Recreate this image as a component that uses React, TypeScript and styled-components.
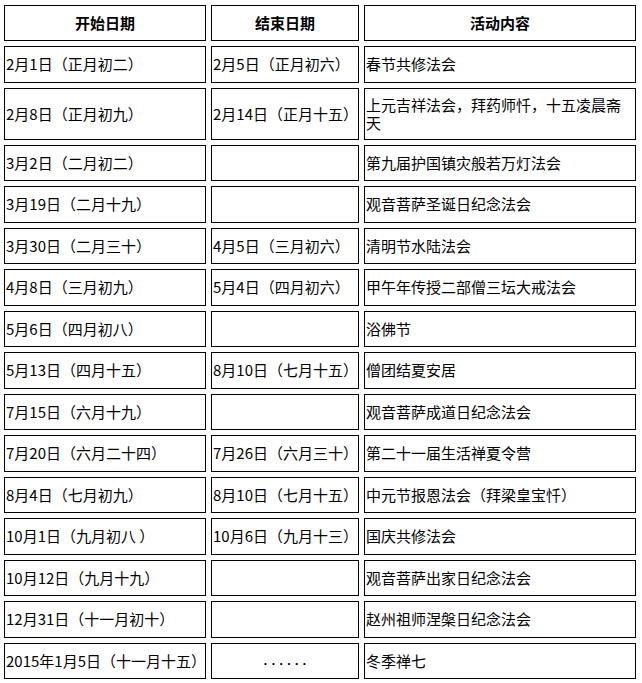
import React from 'react'
import styled, { createGlobalStyle } from 'styled-components'

interface EventRow {
  start: string
  end: string
  content: string
  tall?: boolean
}

const rows: EventRow[] = [
  { start: '2月1日（正月初二）', end: '2月5日（正月初六）', content: '春节共修法会' },
  { start: '2月8日（正月初九）', end: '2月14日（正月十五）', content: '上元吉祥法会，拜药师忏，十五凌晨斋天', tall: true },
  { start: '3月2日（二月初二）', end: '', content: '第九届护国镇灾般若万灯法会' },
  { start: '3月19日（二月十九）', end: '', content: '观音菩萨圣诞日纪念法会' },
  { start: '3月30日（二月三十）', end: '4月5日（三月初六）', content: '清明节水陆法会' },
  { start: '4月8日（三月初九）', end: '5月4日（四月初六）', content: '甲午年传授二部僧三坛大戒法会' },
  { start: '5月6日（四月初八）', end: '', content: '浴佛节' },
  { start: '5月13日（四月十五）', end: '8月10日（七月十五）', content: '僧团结夏安居' },
  { start: '7月15日（六月十九）', end: '', content: '观音菩萨成道日纪念法会' },
  { start: '7月20日（六月二十四）', end: '7月26日（六月三十）', content: '第二十一届生活禅夏令营' },
  { start: '8月4日（七月初九）', end: '8月10日（七月十五）', content: '中元节报恩法会（拜梁皇宝忏）' },
  { start: '10月1日（九月初八 ）', end: '10月6日（九月十三）', content: '国庆共修法会' },
  { start: '10月12日（九月十九）', end: '', content: '观音菩萨出家日纪念法会' },
  { start: '12月31日（十一月初十）', end: '', content: '赵州祖师涅槃日纪念法会' },
  { start: '2015年1月5日（十一月十五）', end: '......', content: '冬季禅七' },
]

const App = (): JSX.Element => {
  return (
    <>
      <GlobalStyle />
      <Schedule>
        <thead>
          <tr>
            <HeadCell $width={202}>开始日期</HeadCell>
            <HeadCell $width={148}>结束日期</HeadCell>
            <HeadCell $width={272}>活动内容</HeadCell>
          </tr>
        </thead>
        <tbody>
          {rows.map((row) => (
            <tr key={row.start}>
              <Cell $tall={row.tall}>{row.start}</Cell>
              <Cell $tall={row.tall} $center={row.end === '......'}>
                {row.end === '......' ? <Dots>......</Dots> : row.end}
              </Cell>
              <Cell $tall={row.tall}>{row.content}</Cell>
            </tr>
          ))}
        </tbody>
      </Schedule>
    </>
  )
}

export default App

const GlobalStyle = createGlobalStyle`
  body {
    margin: 0;
    background: #fff;
    color: #000;
    font-family: "Noto Sans CJK SC", "Noto Sans", sans-serif;
  }
`
const Schedule = styled.table`
  border-collapse: separate;
  border-spacing: 5px;
  table-layout: fixed;
  width: 642px;
  margin: 0 0 0 -1px;
  font-size: 15px;
  line-height: 18px;
`
const HeadCell = styled.th<{ $width: number }>`
  box-sizing: border-box;
  width: ${(p) => p.$width}px;
  height: 36px;
  padding: 0 1px;
  border: 1px solid #000;
  font-weight: 700;
  text-align: center;
  vertical-align: middle;
`
const Cell = styled.td<{ $tall?: boolean; $center?: boolean }>`
  box-sizing: border-box;
  height: ${(p) => (p.$tall ? 52 : 36.5)}px;
  padding: 0 1px;
  border: 1px solid #000;
  text-align: ${(p) => (p.$center ? 'center' : 'left')};
  vertical-align: middle;
  word-break: break-all;
`
const Dots = styled.span`
  font-family: "Liberation Mono", monospace;
  font-size: 13px;
  font-weight: 700;
`
